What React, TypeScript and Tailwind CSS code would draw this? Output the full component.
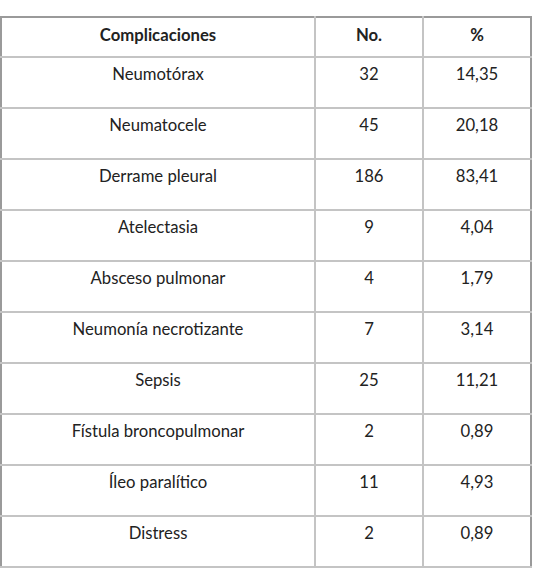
const rows = [
  { name: 'Neumotórax', no: '32', pct: '14,35' },
  { name: 'Neumatocele', no: '45', pct: '20,18' },
  { name: 'Derrame pleural', no: '186', pct: '83,41' },
  { name: 'Atelectasia', no: '9', pct: '4,04' },
  { name: 'Absceso pulmonar', no: '4', pct: '1,79' },
  { name: 'Neumonía necrotizante', no: '7', pct: '3,14' },
  { name: 'Sepsis', no: '25', pct: '11,21' },
  { name: 'Fístula broncopulmonar', no: '2', pct: '0,89' },
  { name: 'Íleo paralítico', no: '11', pct: '4,93' },
  { name: 'Distress', no: '2', pct: '0,89' },
];

export default function App() {
  return (
    <div className="w-[534px] h-[587px] bg-white pt-[16px] text-[#222] font-['Lato','Liberation_Sans',sans-serif] text-[16.7px] leading-[20px]">
      <table className="w-[532px] border-collapse border-2 border-[#9a9a9a] table-fixed">
        <colgroup>
          <col className="w-[314px]" />
          <col className="w-[108px]" />
          <col />
        </colgroup>
        <thead>
          <tr className="h-[40px]">
            <th className="border-2 border-[#c4c4c4] border-t-[#9a9a9a] border-l-[#9a9a9a] font-bold text-center align-top pt-[7px]">Complicaciones</th>
            <th className="border-2 border-[#c4c4c4] border-t-[#9a9a9a] font-bold text-center align-top pt-[7px]">No.</th>
            <th className="border-2 border-[#c4c4c4] border-t-[#9a9a9a] border-r-[#9a9a9a] font-bold text-center align-top pt-[7px]">%</th>
          </tr>
        </thead>
        <tbody>
          {rows.map((r) => (
            <tr key={r.name} className="h-[51px]">
              <td className="border-2 border-[#c4c4c4] border-l-[#9a9a9a] text-center align-top pt-[6px]">{r.name}</td>
              <td className="border-2 border-[#c4c4c4] text-center align-top pt-[6px]">{r.no}</td>
              <td className="border-2 border-[#c4c4c4] border-r-[#9a9a9a] text-center align-top pt-[6px]">{r.pct}</td>
            </tr>
          ))}
        </tbody>
      </table>
    </div>
  );
}
